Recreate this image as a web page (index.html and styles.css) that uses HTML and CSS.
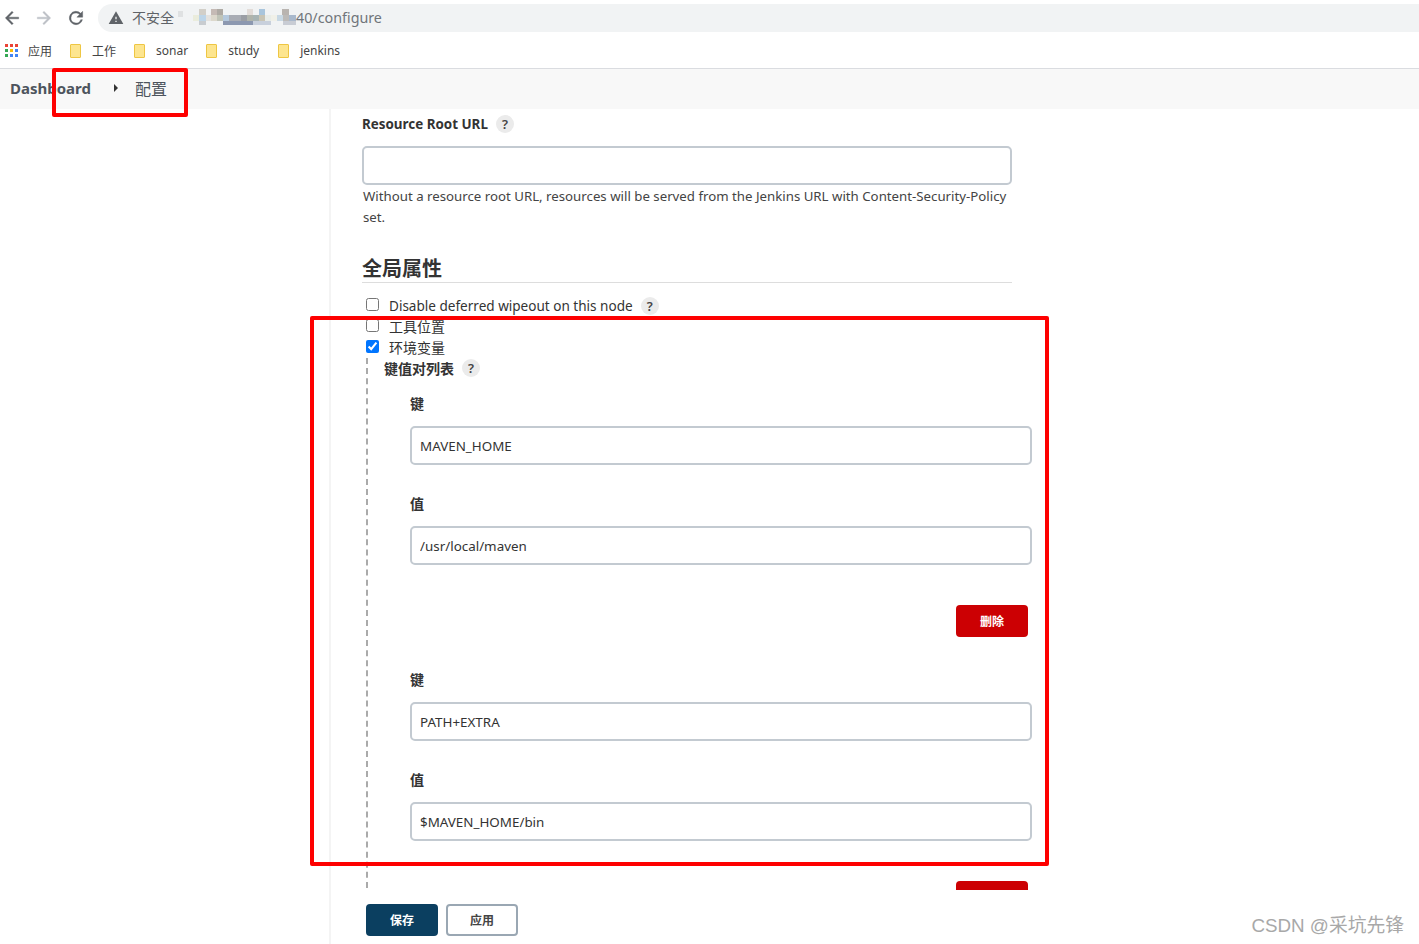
FILE: index.html
```html
<!DOCTYPE html>
<html lang="zh">

<head>
  <meta charset="UTF-8">
  <title>配置</title>
  <link rel="stylesheet" href="styles.css">
</head>

<body>
  <div class="toolbar">
    <svg class="nav_icon" viewBox="0 0 24 24"><path d="M20 11H7.8l5.6-5.6L12 4l-8 8 8 8 1.4-1.4L7.8 13H20z" fill="#5f6368" stroke="#5f6368" stroke-width="0.5"/></svg>
    <svg class="nav_icon" viewBox="0 0 24 24"><path d="M4 11h12.2l-5.6-5.6L12 4l8 8-8 8-1.4-1.4 5.6-5.6H4z" fill="#bdc1c6" stroke="#bdc1c6" stroke-width="0.5"/></svg>
    <svg class="nav_icon" viewBox="0 0 24 24"><path d="M17.65 6.35A8 8 0 1 0 19.73 14h-2.08A6 6 0 1 1 12 6c1.66 0 3.14.69 4.22 1.78L13 11h7V4z" fill="#5f6368" stroke="#5f6368" stroke-width="0.5"/></svg>
    <div class="address">
      <svg class="warn" viewBox="0 0 24 24"><path d="M1 21h22L12 2zm12-3h-2v-2h2zm0-4h-2v-4h2z" fill="#5f6368"/></svg>
      <span class="insecure">不安全</span>
      <span class="mosaic_dot"></span>
      <span class="mosaic">
        <i class="row_a"></i>
        <i class="row_b"></i>
        <i class="row_c"></i>
      </span>
      <span class="url">40/configure</span>
    </div>
  </div>

  <div class="bookmarks">
    <div class="bookmark">
      <svg class="apps" viewBox="0 0 13 13">
        <rect x="0" y="0" width="3" height="3" fill="#ea4335"/><rect x="5" y="0" width="3" height="3" fill="#ea4335"/><rect x="10" y="0" width="3" height="3" fill="#ea4335"/>
        <rect x="0" y="5" width="3" height="3" fill="#34a853"/><rect x="5" y="5" width="3" height="3" fill="#fbbc04"/><rect x="10" y="5" width="3" height="3" fill="#4285f4"/>
        <rect x="0" y="10" width="3" height="3" fill="#34a853"/><rect x="5" y="10" width="3" height="3" fill="#4285f4"/><rect x="10" y="10" width="3" height="3" fill="#4285f4"/>
      </svg>
      <span>应用</span>
    </div>
    <div class="bookmark"><span class="folder"></span><span>工作</span></div>
    <div class="bookmark"><span class="folder"></span><span>sonar</span></div>
    <div class="bookmark"><span class="folder"></span><span>study</span></div>
    <div class="bookmark last_mark"><span class="folder"></span><span>jenkins</span></div>
  </div>

  <div class="breadcrumb">
    <span class="crumb_home">Dashboard</span>
    <span class="crumb_arrow"></span>
    <span class="crumb_page">配置</span>
  </div>

  <div class="main">
    <div class="content">
      <div class="label_row top_label">
        <span class="bold">Resource Root URL</span>
        <span class="help">?</span>
      </div>
      <input class="text_ip wide" type="text">
      <div class="desc">Without a resource root URL, resources will be served from the Jenkins URL with Content-Security-Policy set.</div>

      <div class="section_title">全局属性</div>

      <label class="check_row"><input type="checkbox"><span>Disable deferred wipeout on this node</span><span class="help">?</span></label>
      <label class="check_row"><input type="checkbox"><span class="cn_text">工具位置</span></label>
      <label class="check_row"><input type="checkbox" checked><span class="cn_text">环境变量</span></label>

      <div class="env_box">
        <div class="label_row env_label">
          <span class="bold">键值对列表</span>
          <span class="help">?</span>
        </div>

        <div class="pair">
          <div class="field_name">键</div>
          <input class="text_ip" type="text" value="MAVEN_HOME">
          <div class="field_name second">值</div>
          <input class="text_ip" type="text" value="/usr/local/maven">
          <div class="pair_foot"><button type="button" class="del_btn">删除</button></div>
        </div>

        <div class="pair">
          <div class="field_name">键</div>
          <input class="text_ip" type="text" value="PATH+EXTRA">
          <div class="field_name second">值</div>
          <input class="text_ip" type="text" value="$MAVEN_HOME/bin">
          <div class="pair_foot"><button type="button" class="del_btn">删除</button></div>
        </div>
      </div>
    </div>
  </div>

  <div class="bottom_bar">
    <button type="button" class="save_btn">保存</button>
    <button type="button" class="apply_btn">应用</button>
  </div>

  <div class="mark mark_crumb"></div>
  <div class="mark mark_env"></div>
  <div class="watermark">CSDN @采坑先锋</div>
</body>

</html>
```

FILE: styles.css
```css
* {
  box-sizing: border-box;
  margin: 0;
  padding: 0;
}

body {
  width: 1419px;
  height: 944px;
  overflow: hidden;
  position: relative;

  display: flex;
  flex-direction: column;

  background-color: white;
  color: #333;
  font-family: "Noto Sans", "Noto Sans CJK SC", sans-serif;
  font-size: 14px;
}

.toolbar {
  height: 36px;
  flex: none;

  display: flex;
  align-items: center;
}

.nav_icon {
  width: 20px;
  height: 20px;
  margin-left: 2px;
  margin-right: 10px;
}

.address {
  flex: 1;
  height: 28px;
  margin-left: 2px;
  margin-right: -20px;
  padding-left: 10px;

  display: flex;
  align-items: center;

  border-radius: 14px;
  background-color: #f1f3f4;
  color: #70757a;
}

.warn {
  width: 16px;
  height: 16px;
  margin-right: 8px;
}

.insecure {
  margin-top: -2px;
  color: #5f6368;
}

.mosaic_dot {
  width: 5px;
  height: 6px;
  margin-left: 4px;
  margin-bottom: 8px;
  background-color: #dfe1e2;
}

.mosaic {
  width: 103px;
  height: 16px;
  margin-left: 10px;
  margin-bottom: 2px;

  display: flex;
  flex-direction: column;
}

.mosaic i {
  display: block;
  height: 6px;
}

.row_a {
  background: linear-gradient(90deg,
      transparent 0 6px, #d2cfc8 6px 13px, transparent 13px 18px,
      #c5bab5 18px 24px, #aeaaa4 24px 30px, transparent 30px 54px,
      #e2dcd8 54px 60px, transparent 60px 66px, #a9c5dc 66px 72px,
      transparent 72px 89px, #b9b4b0 89px 96px, transparent 96px);
}

.row_b {
  background: linear-gradient(90deg,
      #eaecdc 0 6px, #bdd5e8 6px 13px, #e4e2de 13px 18px,
      #dcd8cc 18px 24px, #c0c4b8 24px 30px, #b4c8dc 30px 36px,
      #a8acb4 36px 48px, #9a9ea4 48px 54px, #b0b4ac 54px 60px,
      #a8b4b4 60px 66px, #c8c4b4 66px 72px, #e8ece8 72px 78px,
      #f0f0e8 78px 84px, #c8d8e4 84px 90px, #bcbab8 90px 96px, #a8b8cc 96px);
}

.mosaic .row_c {
  height: 4px;
  background: linear-gradient(90deg,
      transparent 0 6px, #c8ccd0 6px 13px, transparent 13px 30px,
      #8c98b0 30px 60px, #c8d0dc 60px 78px, transparent 78px 90px, #c8ccd4 90px);
}

.url {
  margin-top: -2px;
  font-size: 14.3px;
}

.bookmarks {
  height: 33px;
  flex: none;

  display: flex;
  align-items: center;
  padding-left: 5px;
  padding-bottom: 3px;

  border-bottom: 1px solid #dadce0;
  font-size: 12px;
  color: #444;
}

.bookmark {
  display: flex;
  align-items: center;
  margin-right: 18px;
}

.last_mark {
  margin-left: 1px;
}

.apps {
  width: 13px;
  height: 13px;
  margin-right: 10px;
}

.folder {
  width: 11px;
  height: 14px;
  margin-right: 11px;

  background-color: #fde58f;
  border: 1px solid #eec643;
  border-radius: 1px;
}

.breadcrumb {
  height: 40px;
  flex: none;

  display: flex;
  align-items: center;
  padding-left: 10px;
  padding-bottom: 2px;

  background-color: #f8f8f8;
  color: #4d545d;
}

.crumb_home {
  width: 104px;
  font-size: 15px;
  font-weight: 700;
}

.crumb_arrow {
  width: 0;
  height: 0;
  margin-right: 17px;

  border-left: 4px solid #333;
  border-top: 4px solid transparent;
  border-bottom: 4px solid transparent;
}

.crumb_page {
  font-size: 16px;
}

.main {
  height: 781px;
  flex: none;
  overflow: hidden;
  padding-left: 329px;
}

.content {
  width: 703px;
  min-height: 100%;
  padding: 5px 0 0 31px;
  border-left: 2px solid #f4f4f4;
}

.label_row {
  display: flex;
  align-items: center;
}

.bold {
  font-weight: 700;
  color: #333;
}

.top_label {
  height: 20px;
  margin-bottom: 12px;
  font-size: 13.4px;
}

.help {
  width: 18px;
  height: 18px;
  margin-left: 8px;

  display: flex;
  justify-content: center;
  align-items: center;

  border-radius: 50%;
  background-color: #ebebeb;
  color: #444;
  font-size: 13px;
  font-weight: 600;
}

.text_ip {
  display: block;
  width: 622px;
  height: 39px;
  padding: 0 8px;

  border: 2px solid #c3cad1;
  border-radius: 5px;
  outline: none;

  color: #333;
  font-family: inherit;
  font-size: 13.4px;
}

.wide {
  width: 650px;
}

.desc {
  width: 650px;
  margin-top: 1px;
  padding-left: 1px;
  line-height: 21px;
  font-size: 13.25px;
  color: #444;
}

.section_title {
  width: 650px;
  height: 28px;
  margin-top: 27px;
  margin-bottom: 12px;

  border-bottom: 1px solid #ddd;

  font-size: 20px;
  font-weight: 700;
  line-height: 27px;
}

.check_row {
  height: 21px;
  display: flex;
  align-items: center;
  padding-left: 4px;
  font-size: 13.55px;
}

.check_row input {
  width: 13px;
  height: 13px;
  margin-right: 10px;
  margin-bottom: 2px;
}

.cn_text {
  margin-top: -2px;
  font-size: 14px;
}

.env_box {
  margin-left: 4px;
  padding-left: 16px;
  height: 540px;

  border-left: 2px dashed #aaa;
}

.env_label {
  height: 20px;
  font-size: 14px;
}

.pair {
  padding-left: 26px;
}

.field_name {
  height: 20px;
  margin-top: 15px;
  margin-bottom: 13px;
  font-size: 14px;
  font-weight: 700;
}

.second {
  margin-top: 28px;
}

.pair_foot {
  display: flex;
  justify-content: flex-end;
  width: 618px;
  padding-top: 40px;
  padding-bottom: 17px;
}

.del_btn {
  width: 72px;
  height: 32px;

  border: none;
  border-radius: 4px;
  background-color: #cc0003;
  color: white;
  font-family: inherit;
  font-size: 12px;
  font-weight: 700;
}

.bottom_bar {
  height: 54px;
  flex: none;

  display: flex;
  gap: 8px;
  margin-left: 329px;
  padding: 14px 0 0 35px;
  border-left: 2px solid #f4f4f4;
}

.save_btn,
.apply_btn {
  width: 72px;
  height: 32px;
  border-radius: 4px;
  font-family: inherit;
  font-size: 12px;
  font-weight: 700;
}

.save_btn {
  border: none;
  background-color: #0b3f60;
  color: white;
}

.apply_btn {
  border: 2px solid #9aa7b3;
  background-color: white;
  color: #444;
}

.mark {
  position: absolute;
  border: 4px solid #fe0000;
  border-radius: 2px;
}

.mark_crumb {
  left: 52px;
  top: 68px;
  width: 136px;
  height: 49px;
}

.mark_env {
  left: 310px;
  top: 316px;
  width: 739px;
  height: 550px;
}

.watermark {
  position: absolute;
  right: 15px;
  top: 910px;

  color: #a8a8a8;
  font-family: "Liberation Sans", "Noto Sans CJK SC", sans-serif;
  font-size: 18.8px;
}
```
